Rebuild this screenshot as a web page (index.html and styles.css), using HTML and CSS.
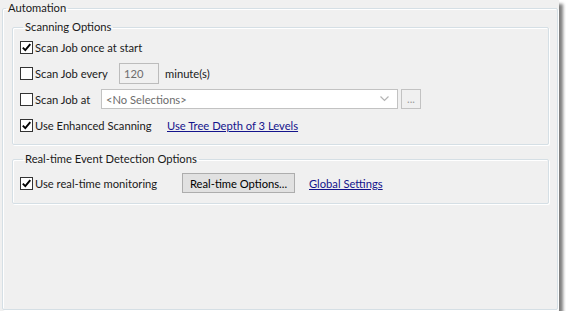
FILE: index.html
```html
<!DOCTYPE html>
<html lang="en">
<head>
    <meta charset="UTF-8">
    <title>Automation</title>
    <link rel="stylesheet" href="styles.css">
</head>
<body>
    <div class="window">
        <fieldset class="group outer">
            <legend>Automation</legend>

            <fieldset class="group">
                <legend>Scanning Options</legend>
                <div class="row">
                    <span class="check on"><svg viewBox="0 0 11 11" width="11" height="11"><path d="M1.8 5.6 L4.3 8.2 L9.3 2.2" /></svg></span>
                    <span class="label">Scan Job once at start</span>
                </div>
                <div class="row">
                    <span class="check"></span>
                    <span class="label w-every">Scan Job every</span>
                    <span class="textbox">120</span>
                    <span class="unit">minute(s)</span>
                </div>
                <div class="row">
                    <span class="check"></span>
                    <span class="label w-at">Scan Job at</span>
                    <span class="combo">
                        <span>&lt;No Selections&gt;</span>
                        <svg viewBox="0 0 9 6" width="9" height="6"><path d="M0.5 0.5 L4.5 4.5 L8.5 0.5" /></svg>
                    </span>
                    <span class="browse">...</span>
                </div>
                <div class="row">
                    <span class="check on"><svg viewBox="0 0 11 11" width="11" height="11"><path d="M1.8 5.6 L4.3 8.2 L9.3 2.2" /></svg></span>
                    <span class="label w-enhanced">Use Enhanced Scanning</span>
                    <a href="#" class="link">Use Tree Depth of 3 Levels</a>
                </div>
            </fieldset>

            <fieldset class="group realtime">
                <legend>Real-time Event Detection Options</legend>
                <div class="row">
                    <span class="check on"><svg viewBox="0 0 11 11" width="11" height="11"><path d="M1.8 5.6 L4.3 8.2 L9.3 2.2" /></svg></span>
                    <span class="label w-monitor">Use real-time monitoring</span>
                    <button class="btn">Real-time Options...</button>
                    <a href="#" class="link global">Global Settings</a>
                </div>
            </fieldset>
        </fieldset>
    </div>
</body>
</html>
```

FILE: styles.css
```css
* {
    margin: 0;
    padding: 0;
    box-sizing: border-box;
}
:root {
    --panel-bg: #f0f0f0;
    --frame: #d5dfe5;
    --text: #1a1a1a;
    --link: #14148c;
    --muted: #6d6d6d;
}
body {
    font-family: Lato, 'Liberation Sans', Arial, sans-serif;
    font-size: 11.2px;
    color: var(--text);
    background: #fff;
}
.window {
    width: 559px;
    height: 311px;
    background: var(--panel-bg);
    padding: 1px 1px 1px 2px;
    box-shadow: 4px 4px 3px rgba(0, 0, 0, 0.5);
}
.group {
    border: 1px solid var(--frame);
    border-radius: 2px;
    box-shadow: inset 1px 1px 0 #fff, 1px 1px 0 #fff;
    min-inline-size: 0;
}
.group legend {
    margin-left: 3px;
    padding: 0 2px;
    line-height: 14px;
}
.outer {
    height: 100%;
}
.outer > .group {
    margin: 5px 8px 0 9px;
    padding: 0 0 6px 7px;
}
.outer > .realtime {
    margin-top: 7px;
    padding-top: 4px;
    padding-bottom: 7px;
}
.row {
    display: flex;
    align-items: center;
    height: 26px;
}
.check {
    width: 13px;
    height: 13px;
    border: 1px solid #333;
    background: #fff;
    flex-shrink: 0;
    display: flex;
    align-items: center;
    justify-content: center;
}
.check svg path {
    fill: none;
    stroke: #000;
    stroke-width: 1.9;
}
.label {
    margin-left: 2px;
    white-space: nowrap;
}
.w-every { width: 84px; }
.w-at { width: 66px; }
.w-enhanced { width: 132px; }
.w-monitor { width: 147px; }
.textbox {
    width: 40px;
    height: 21px;
    border: 1px solid #bcbcbc;
    background: var(--panel-bg);
    color: var(--muted);
    padding: 3px 0 0 4px;
    line-height: 13px;
}
.unit {
    margin-left: 6px;
}
.combo {
    width: 297px;
    height: 20px;
    border: 1px solid #c2c2c2;
    background: #fff;
    color: var(--muted);
    display: flex;
    align-items: center;
    justify-content: space-between;
    padding: 0 8px 0 4px;
}
.combo svg path {
    fill: none;
    stroke: #b4b4b4;
    stroke-width: 1.2;
}
.browse {
    width: 20px;
    height: 20px;
    margin-left: 3px;
    border: 1px solid #c2c2c2;
    color: #9a9a9a;
    text-align: center;
    line-height: 18px;
}
.link {
    color: var(--link);
    text-decoration: underline;
    white-space: nowrap;
}
.btn {
    font: inherit;
    color: #000;
    width: 113px;
    height: 20px;
    background: #e1e1e1;
    border: 1px solid #adadad;
    text-align: center;
}
.global {
    margin-left: 14px;
}
```
